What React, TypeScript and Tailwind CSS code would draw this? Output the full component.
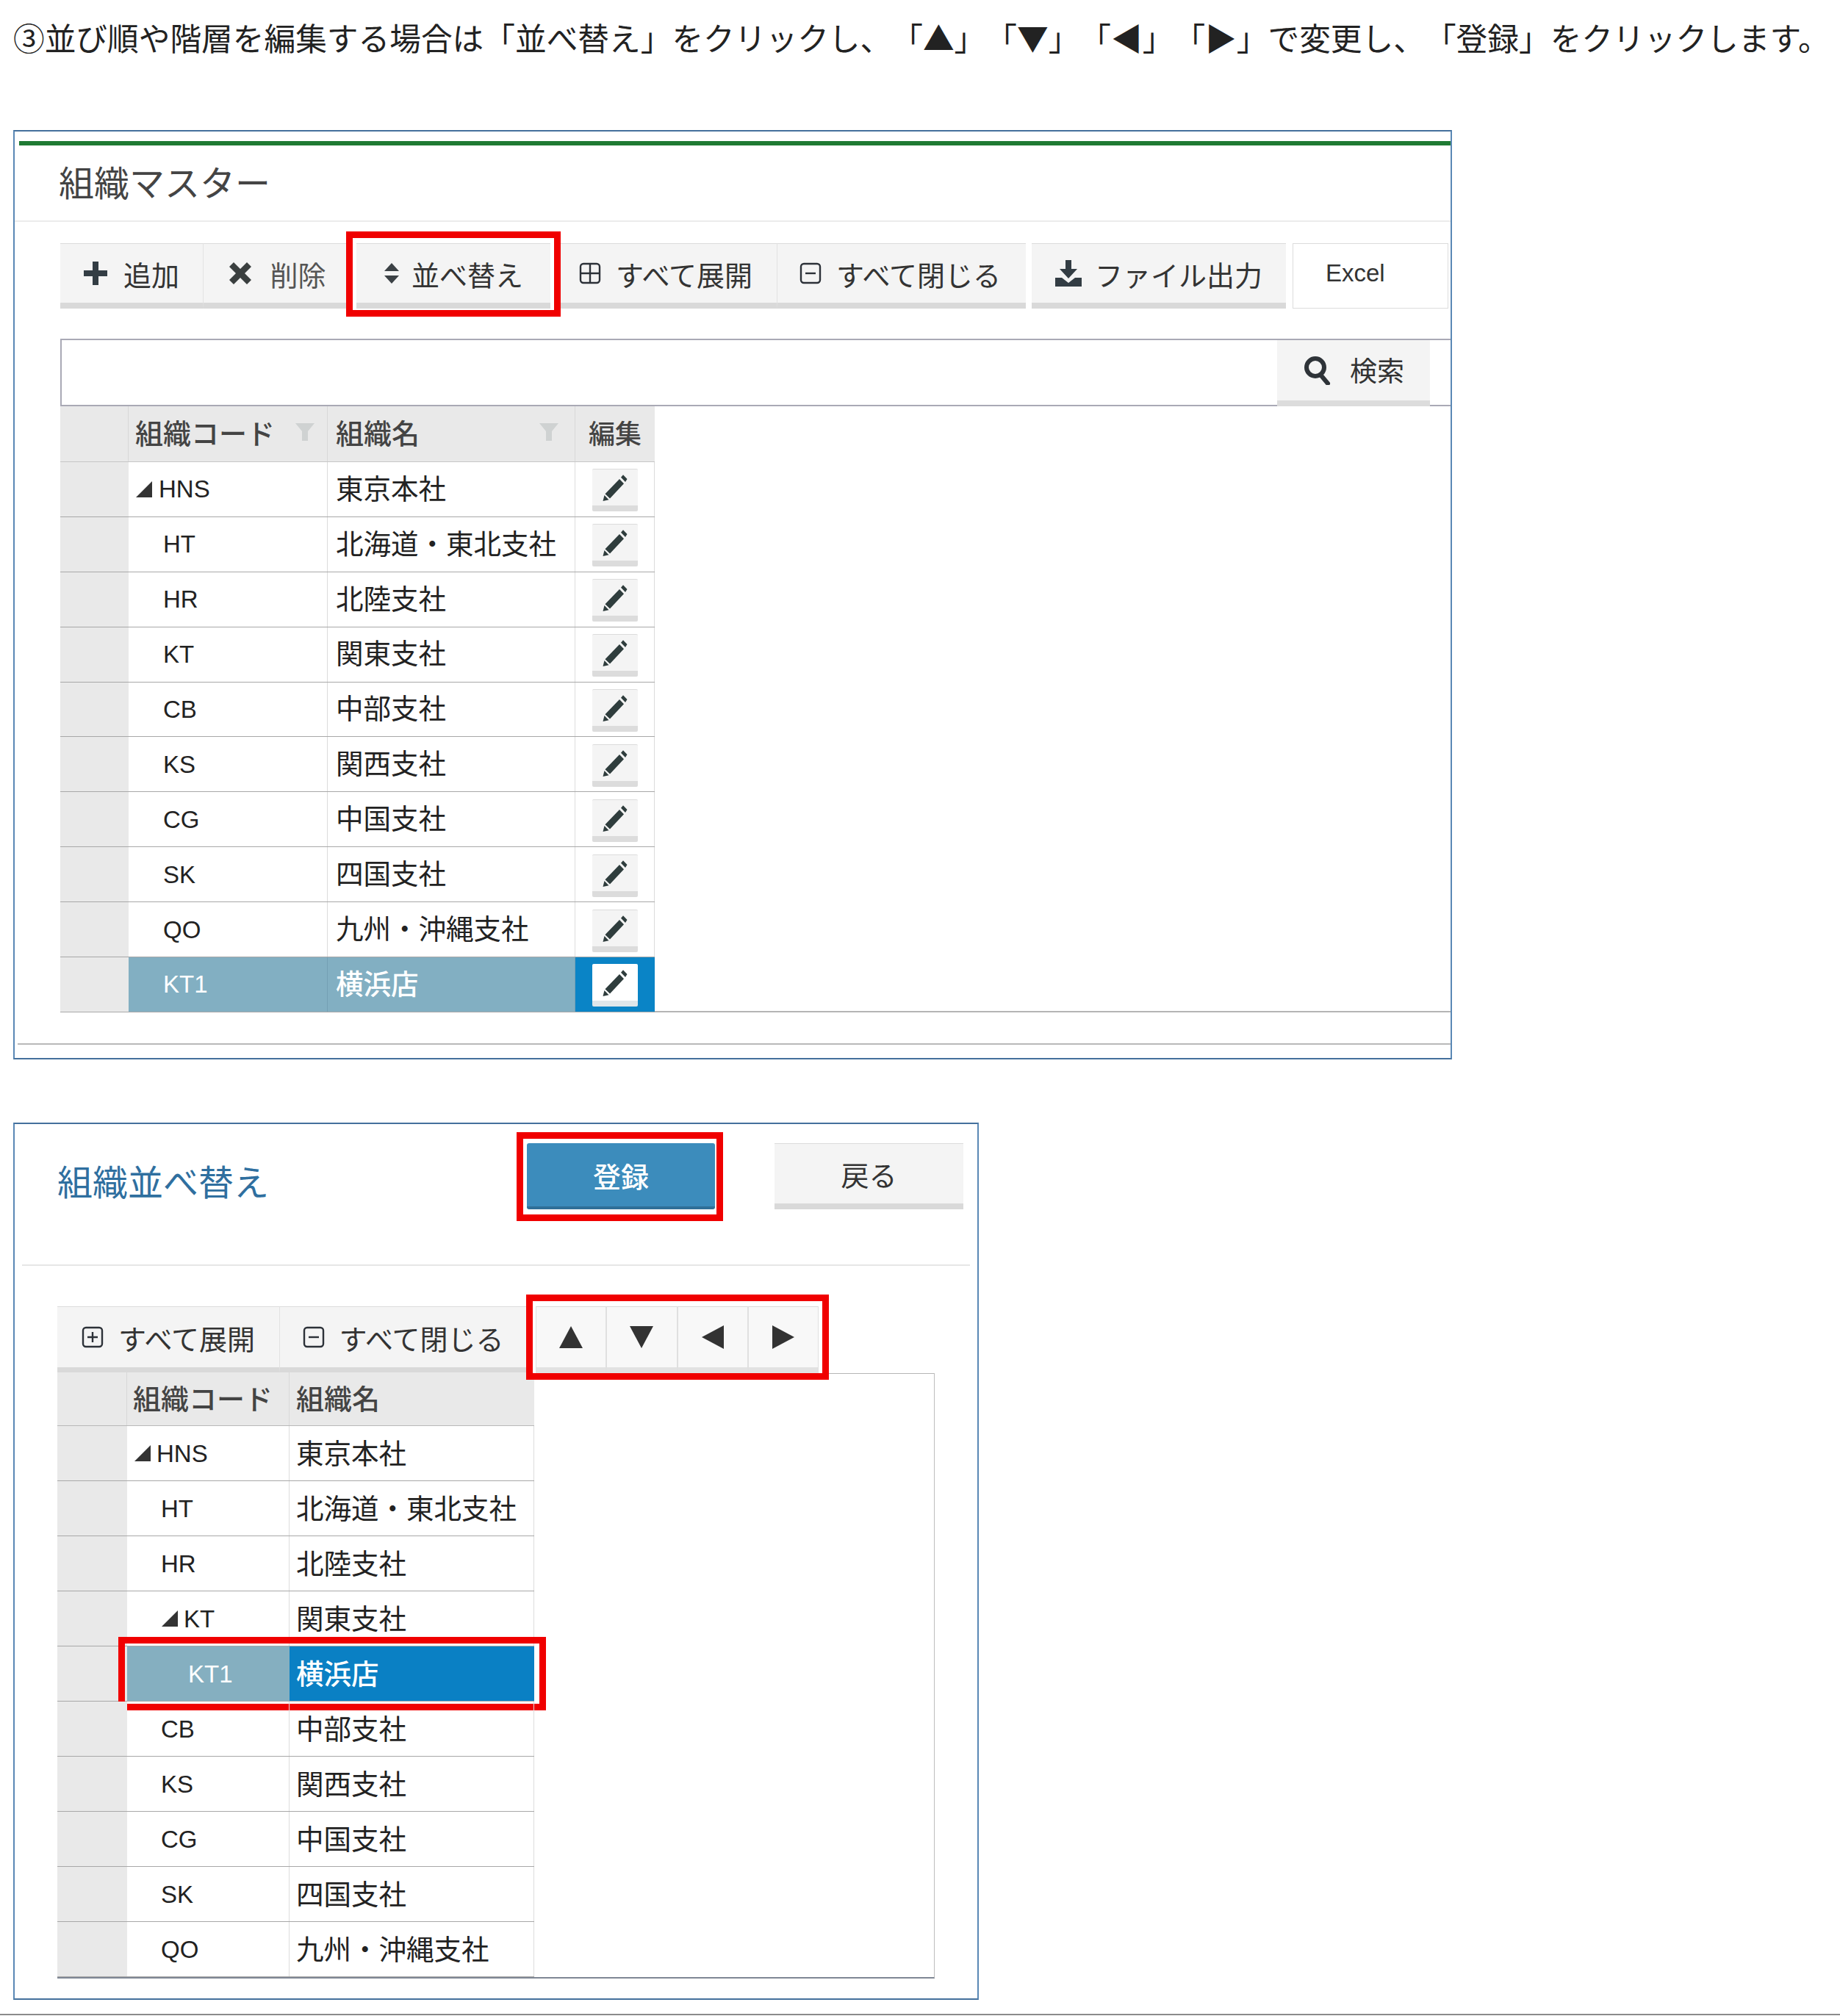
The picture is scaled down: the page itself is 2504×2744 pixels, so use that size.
import React from "react";

const jp = { fontFamily: '"Noto Sans CJK JP", "Noto Sans", sans-serif' };

const Pencil = () => (
  <svg viewBox="0 0 34 32" preserveAspectRatio="none" className="w-[34px] h-[37px]" aria-hidden="true">
    <path d="M28 1L33.5 6L31 9.5L25 4.2ZM23 6L29 11.5L10 29L3.5 23.5Z" fill="#2f3d3d" />
    <path d="M2.5 25L8.5 30.5L0.5 32Z" fill="#2f3d3d" />
  </svg>
);

const PlusBox = ({ grid = false }: { grid?: boolean }) => (
  <svg viewBox="0 0 30 30" className="w-[30px] h-[30px] shrink-0" fill="none" stroke="#2c3138" strokeWidth="2.4" aria-hidden="true">
    <rect x="2" y="2" width="26" height="26" rx="4" />
    <path d={grid ? "M2 15H28M15 2V28" : "M8 15H22M15 8V22"} />
  </svg>
);

const MinusBox = () => (
  <svg viewBox="0 0 30 30" className="w-[30px] h-[30px] shrink-0" fill="none" stroke="#2c3138" strokeWidth="2.4" aria-hidden="true">
    <rect x="2" y="2" width="26" height="26" rx="4" />
    <path d="M8 15H22" />
  </svg>
);

const Tool = ({ className, children }: { className: string; children: React.ReactNode }) => (
  <div className={`h-full flex items-center justify-center bg-[#f4f4f4] border-t border-[#dcdcdc] border-b-[8px] border-b-[#d9d9d9] text-[38px] text-[#333] ${className}`}>
    {children}
  </div>
);

const Red = ({ className }: { className: string }) => (
  <div className={`absolute border-[9px] border-[#f00000] pointer-events-none ${className}`} />
);

type Row = { code: string; name: string; tree?: boolean; sel?: boolean };

const rows1: Row[] = [
  { code: "HNS", name: "東京本社", tree: true },
  { code: "HT", name: "北海道・東北支社" },
  { code: "HR", name: "北陸支社" },
  { code: "KT", name: "関東支社" },
  { code: "CB", name: "中部支社" },
  { code: "KS", name: "関西支社" },
  { code: "CG", name: "中国支社" },
  { code: "SK", name: "四国支社" },
  { code: "QO", name: "九州・沖縄支社" },
  { code: "KT1", name: "横浜店", sel: true },
];

const rows2: Row[] = [
  { code: "HNS", name: "東京本社", tree: true },
  { code: "HT", name: "北海道・東北支社" },
  { code: "HR", name: "北陸支社" },
  { code: "KT", name: "関東支社", tree: true },
  { code: "KT1", name: "横浜店", sel: true },
  { code: "CB", name: "中部支社" },
  { code: "KS", name: "関西支社" },
  { code: "CG", name: "中国支社" },
  { code: "SK", name: "四国支社" },
  { code: "QO", name: "九州・沖縄支社" },
];

const Tri = () => (
  <span className="w-0 h-0 border-l-[22px] border-l-transparent border-b-[22px] border-b-[#333] shrink-0" />
);

const Code = ({ children }: { children: string }) => (
  <span className="text-[33px] leading-none" style={{ fontFamily: '"Liberation Sans", sans-serif' }}>{children}</span>
);

const Funnel = () => (
  <svg viewBox="0 0 26 28" className="w-[26px] h-[28px] shrink-0" aria-hidden="true">
    <path d="M0 2H26L17 13V26H9V13Z" fill="#cfd2d2" />
  </svg>
);

function Triangle({ dir }: { dir: "up" | "down" | "left" | "right" }) {
  const d = { up: "M16 0L32 30H0Z", down: "M0 0H32L16 30Z", left: "M30 0V32L0 16Z", right: "M0 0L30 16L0 32Z" }[dir];
  const size = dir === "up" || dir === "down" ? "w-[32px] h-[30px]" : "w-[30px] h-[32px]";
  const vb = dir === "up" || dir === "down" ? "0 0 32 30" : "0 0 30 32";
  return (
    <svg viewBox={vb} className={size} aria-hidden="true">
      <path d={d} fill="#333" />
    </svg>
  );
}

export default function App() {
  return (
    <div className="w-[2504px] h-[2744px] bg-white overflow-hidden text-[#222]" style={jp}>
      <p className="h-[177px] pt-[22px] pl-[18px] text-[42.7px] leading-[56px] whitespace-nowrap text-[#222] [text-spacing-trim:space-all]">
        ③並び順や階層を編集する場合は「並べ替え」をクリックし、「▲」「▼」「◀」「▶」で変更し、「登録」をクリックします。
      </p>

      {/* Panel 1 */}
      <section className="ml-[18px] w-[1958px] h-[1265px] border-2 border-[#5a88b5] border-t-[#44709c] border-b-[#44709c] bg-white flex flex-col">
        <div className="mt-[13px] ml-[6px] h-[6px] bg-[#1f7a33] shrink-0" />
        <div className="h-[104px] shrink-0 flex items-center pl-[60px] pb-[6px] text-[48px] text-[#444] border-b-2 border-[#ececec]">組織マスター</div>

        <div className="mt-[29px] h-[89px] shrink-0 flex pl-[62px]">
          <Tool className="w-[195px] gap-[22px] border-r border-r-[#e2e2e2]">
            <svg viewBox="0 0 32 32" className="w-[32px] h-[32px]" aria-hidden="true"><path d="M12 0H20V12H32V20H20V32H12V20H0V12H12Z" fill="#333d44" /></svg>
            <span>追加</span>
          </Tool>
          <Tool className="w-[194px] gap-[24px] pl-[7px]">
            <svg viewBox="0 0 32 32" className="w-[32px] h-[32px]" aria-hidden="true"><path d="M7 1L16 10L25 1L31 7L22 16L31 25L25 31L16 22L7 31L1 25L10 16L1 7Z" fill="#3a3f3f" /></svg>
            <span className="text-[#555]">削除</span>
          </Tool>
          <div className="relative w-[292px] h-full px-[14px]">
            <Tool className="w-full gap-[16px]">
              <svg viewBox="0 0 22 30" className="w-[22px] h-[30px]" aria-hidden="true"><path d="M11 1L21 12H1ZM1 18H21L11 29Z" fill="#3b4145" /></svg>
              <span>並べ替え</span>
            </Tool>
            <Red className="-top-[16px] -bottom-[11px] left-0 right-0" />
          </div>
          <Tool className="w-[295px] gap-[20px] pr-[8px] border-r border-r-[#e2e2e2]"><PlusBox grid /><span>すべて展開</span></Tool>
          <Tool className="w-[338px] gap-[20px] pr-[4px]"><MinusBox /><span>すべて閉じる</span></Tool>
          <Tool className="w-[346px] gap-[18px] ml-[8px]">
            <svg viewBox="0 0 36 36" className="w-[36px] h-[36px]" aria-hidden="true"><path d="M14 0H22V12H30L18 25L6 12H14ZM0 24H9L18 31L27 24H36V36H0Z" fill="#333d44" /></svg>
            <span>ファイル出力</span>
          </Tool>
          <div className="ml-[9px] w-[212px] h-full bg-white border border-[#dcdcdc] pl-[44px] flex items-center pb-[8px] text-[33px] text-[#333]" style={{ fontFamily: '"Liberation Sans", sans-serif' }}>Excel</div>
        </div>

        <div className="mt-[41px] ml-[62px] h-[92px] shrink-0 flex justify-end border-t-2 border-b-2 border-l-2 border-[#a9a9b5] bg-white pr-[28px]">
          <div className="w-[208px] h-[90px] flex items-center justify-center gap-[24px] bg-[#f4f4f4] border-b-[8px] border-b-[#dcdcdc] text-[37px] text-[#333]">
            <svg viewBox="0 0 40 40" className="w-[40px] h-[40px]" fill="none" stroke="#2e3338" strokeWidth="6" aria-hidden="true"><circle cx="17" cy="16" r="12" /><path d="M24 26L34 38" strokeLinecap="round" /></svg>
            <span>検索</span>
          </div>
        </div>

        <div className="ml-[62px] w-[809px] flex flex-col shrink-0">
          <div className="h-[76px] flex bg-[#e9e9e9] border-b border-[#c6c6c6] text-[38px] font-medium text-[#444]">
            <div className="w-[93px] border-r border-[#d8d8d8]" />
            <div className="w-[271px] border-r border-[#d8d8d8] pl-[9px] pb-[6px] flex items-center justify-between pr-[17px] whitespace-nowrap">組織コード<Funnel /></div>
            <div className="w-[337px] border-r border-[#d8d8d8] pl-[11px] pb-[6px] flex items-center justify-between pr-[22px]">組織名<Funnel /></div>
            <div className="flex-1 flex items-center justify-center pb-[6px] text-[36px]">編集</div>
          </div>
          {rows1.map((r) => (
            <div key={r.code} className={`h-[74.9px] flex border-b border-[#a8a8a8] text-[37.5px] ${r.sel ? "text-white" : ""}`}>
              <div className="w-[93px] bg-[#e9e9e9]" />
              <div className={`w-[271px] border-r flex items-center gap-[9px] ${r.tree ? "pl-[10px]" : "pl-[47px]"} ${r.sel ? "bg-[#82afc2] border-r-[#74a0b4]" : "border-r-[#dcdcdc]"}`}>
                {r.tree && <Tri />}
                <Code>{r.code}</Code>
              </div>
              <div className={`w-[337px] border-r pl-[11px] pb-[6px] flex items-center whitespace-nowrap ${r.sel ? "bg-[#82afc2] border-r-[#74a0b4] font-medium" : "border-r-[#dcdcdc]"}`}>{r.name}</div>
              <div className={`flex-1 flex items-center justify-center border-r ${r.sel ? "bg-[#0a84c6] border-r-[#0a84c6]" : "border-r-[#dcdcdc]"}`}>
                <div className={`w-[62px] h-[58px] mt-[3px] flex items-center justify-center rounded-[2px] border-b-[8px] ${r.sel ? "bg-white border-b-[#dfe6ea]" : "bg-[#f4f4f4] border-b-[#dcdcdc] border-t border-t-[#dcdcdc]"}`}>
                  <Pencil />
                </div>
              </div>
            </div>
          ))}
        </div>
        <div className="ml-[871px] -mt-[2px] h-[2px] bg-[#b5b5b5] shrink-0" />
        <div className="mt-[42px] ml-[4px] h-[2px] bg-[#b9b9b9] shrink-0" />
      </section>

      {/* Panel 2 */}
      <section className="mt-[86px] ml-[18px] w-[1314px] h-[1194px] border-2 border-[#5a88b5] border-t-[#44709c] border-b-[#44709c] bg-white flex flex-col">
        <div className="h-[193px] shrink-0 flex items-center pl-[48px] pb-[49px] border-b-2 border-[#e6e6e6] mx-[10px]">
          <span className="text-[48px] text-[#2f6f9f] w-[639px] mt-[10px]">組織並べ替え</span>
          <div className="relative w-[256px] h-[90px]">
            <div className="w-full h-full rounded-[3px] bg-[#3c8cbc] border-b-[4px] border-b-[#2f6f98] flex items-center justify-center text-[38px] font-medium text-white">登録</div>
            <Red className="-top-[15px] -bottom-[16px] -left-[14px] right-[-11px]" />
          </div>
          <div className="ml-[81px] w-[257px] h-[90px] bg-[#f4f4f4] border-t border-[#dcdcdc] border-b-[8px] border-b-[#d9d9d9] flex items-center justify-center text-[38px] text-[#333]">戻る</div>
        </div>

        <div className="mt-[55px] ml-[58px] h-[91px] shrink-0 flex">
          <Tool className="w-[303px] gap-[20px] border-r border-r-[#e2e2e2]"><PlusBox /><span>すべて展開</span></Tool>
          <Tool className="w-[335px] gap-[20px]"><MinusBox /><span>すべて閉じる</span></Tool>
          <div className="relative ml-[13px] w-[385px] h-full flex">
            {(["up", "down", "left", "right"] as const).map((d) => (
              <div key={d} className="flex-1 h-full flex items-center justify-center bg-[#f8f8f8] border-x border-x-[#e0e0e0] border-t border-t-[#d8d8d8] border-b-[8px] border-b-[#e2e2e2]">
                <Triangle dir={d} />
              </div>
            ))}
            <Red className="-top-[16px] -bottom-[9px] -left-[13px] -right-[14px]" />
          </div>
        </div>

        <div className="ml-[58px] w-[1194px] h-[824px] shrink-0 border-r border-b-2 border-r-[#bdbdbd] border-b-[#7f8794] flex flex-col">
          <div className="h-[2px] ml-[648px] bg-[#b5b5b5] -mb-[2px]" />
          <div className="w-[649px] flex flex-col">
            <div className="h-[73px] flex bg-[#e9e9e9] border-b border-[#b8b8b8] text-[38px] font-medium text-[#444]">
              <div className="w-[95px] border-r border-[#d8d8d8]" />
              <div className="w-[221px] border-r border-[#d8d8d8] pl-[8px] pb-[5px] flex items-center whitespace-nowrap overflow-hidden">組織コード</div>
              <div className="flex-1 pl-[9px] pb-[5px] flex items-center">組織名</div>
            </div>
            {rows2.map((r, i) => (
              <div key={r.code} className="relative h-[75px] flex border-b border-[#a8a8a8] text-[37.5px]">
                <div className="w-[95px] bg-[#e9e9e9]" />
                {r.sel ? (
                  <>
                    <div className="w-[221px] bg-[#85afc0] text-white pl-[83px] flex items-center"><Code>{r.code}</Code></div>
                    <div className="flex-1 bg-[#0a80c4] text-white pl-[9px] pb-[4px] flex items-center font-medium">{r.name}</div>
                    <Red className="-top-[13px] -bottom-[13px] left-[83px] -right-[16px]" />
                  </>
                ) : (
                  <>
                    <div className={`w-[221px] border-r border-r-[#dcdcdc] flex items-center gap-[8px] ${r.tree ? (i === 0 ? "pl-[10px]" : "pl-[47px]") : "pl-[46px]"}`}>
                      {r.tree && <Tri />}
                      <Code>{r.code}</Code>
                    </div>
                    <div className="flex-1 border-r border-r-[#dcdcdc] pl-[9px] pb-[4px] flex items-center whitespace-nowrap">{r.name}</div>
                  </>
                )}
              </div>
            ))}
          </div>
        </div>
      </section>
      <div className="mt-[19px] h-[2px] bg-[#8a8a8a]" />
    </div>
  );
}
